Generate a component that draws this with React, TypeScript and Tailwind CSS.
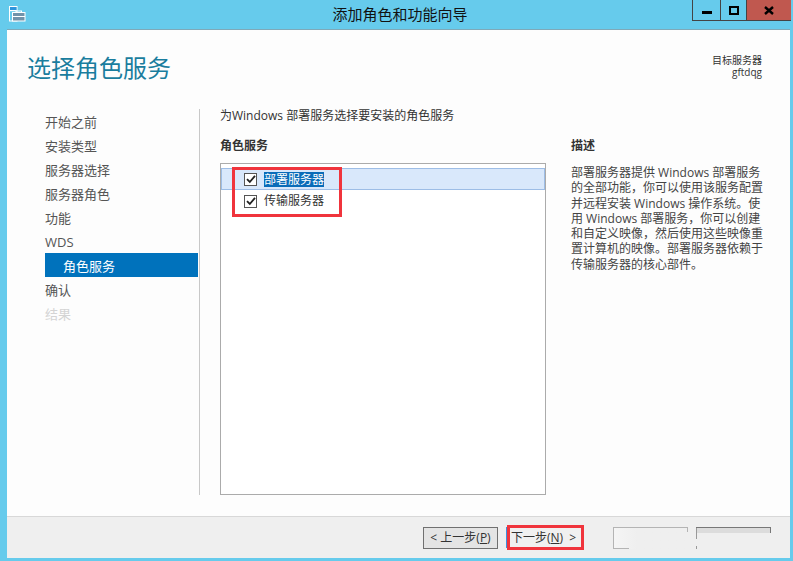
import React from 'react';

const font = { fontFamily: '"Open Sans", "Noto Sans CJK SC", sans-serif' };

const steps = ['开始之前', '安装类型', '服务器选择', '服务器角色', '功能', 'WDS'];

const descLines = [
  '部署服务器提供 Windows 部署服务',
  '的全部功能，你可以使用该服务配置',
  '并远程安装 Windows 操作系统。使',
  '用 Windows 部署服务，你可以创建',
  '和自定义映像，然后使用这些映像重',
  '置计算机的映像。部署服务器依赖于',
  '传输服务器的核心部件。',
];

const Check = () => (
  <span className="w-[13px] h-[13px] border border-[#555] bg-white flex items-center justify-center shrink-0">
    <svg width="10" height="10" viewBox="0 0 10 10" fill="none">
      <path d="M1 5.2 L3.8 8 L9 1.8" stroke="#222" strokeWidth="1.8" />
    </svg>
  </span>
);

const WindowButtons = () => (
  <div className="flex h-[21px] mr-[2px] border-b border-l border-[#444]">
    <div className="w-[28px] border-r border-[#444] flex items-center justify-center">
      <div className="w-[10px] h-[3px] bg-black mt-[5px]" />
    </div>
    <div className="w-[26px] border-r border-[#444] flex items-center justify-center">
      <div className="w-[10px] h-[9px] border-2 border-black" />
    </div>
    <div className="w-[44px] bg-[#c0584f] flex items-center justify-center">
      <svg width="10" height="9" viewBox="0 0 10 9">
        <path d="M1 1 L9 8 M9 1 L1 8" stroke="#000" strokeWidth="2.4" />
      </svg>
    </div>
  </div>
);

const AppIcon = () => (
  <svg width="17" height="16" viewBox="0 0 17 16" fill="none" className="ml-[9px] mt-[6px] shrink-0">
    <rect x="0.5" y="0.5" width="7.5" height="14.5" fill="#66cbec" stroke="#fff" />
    <rect x="1" y="1" width="6.5" height="3" fill="#2f95dc" />
    <rect x="1" y="4" width="6.5" height="1.2" fill="#fff" />
    <rect x="3.5" y="6.5" width="12.5" height="8.5" fill="#7193aa" stroke="#fff" />
    <rect x="7" y="5" width="5.5" height="1.5" stroke="#fff" />
    <rect x="4" y="10" width="12" height="1" fill="#fff" />
  </svg>
);

export default function App() {
  return (
    <div className="w-[793px] h-[561px] bg-[#66cbec] flex flex-col overflow-hidden text-[#444]" style={font}>
      <div className="h-[29px] flex justify-between shrink-0">
        <AppIcon />
        <div className="flex-1 text-center text-[15px] leading-[29px] text-[#111] pl-[82px]">添加角色和功能向导</div>
        <WindowButtons />
      </div>

      <div className="ml-[7px] mr-[3px] h-[529px] flex flex-col border-t border-[#7fa9b8] bg-[#fdfdfd]">
        <div className="h-[79px] flex justify-between shrink-0 pl-[20px] pr-[28px]">
          <h1 className="text-[24px] leading-[32px] mt-[22px] text-[#1a7d9e]">选择角色服务</h1>
          <div className="text-right text-[10px] leading-[12px] mt-[24px] text-[#333]">
            <div>目标服务器</div>
            <div>gftdqg</div>
          </div>
        </div>

        <div className="flex h-[386px] shrink-0">
          <nav className="w-[193px] border-r border-[#c8c8c8] pl-[38px] text-[13px] leading-[26px] text-[#555] shrink-0">
            {steps.map((s) => (
              <div key={s} className="h-[24px]">{s}</div>
            ))}
            <div className="h-[24px] mr-px bg-[#0072bc] text-white pl-[18px]">角色服务</div>
            <div className="h-[24px]">确认</div>
            <div className="h-[24px] text-[#d4d4d4]">结果</div>
          </nav>

          <div className="pl-[20px] flex flex-col flex-1">
            <p className="text-[12px] leading-[16px] text-[#333] -mt-[1px]">为Windows 部署服务选择要安装的角色服务</p>
            <div className="flex flex-1 mt-[14px]">
              <div className="w-[326px] flex flex-col shrink-0">
                <h2 className="text-[12px] leading-[16px] font-bold text-[#333]">角色服务</h2>
                <div className="relative mt-[9px] flex-1 bg-white border border-[#ababab] pt-[4px] text-[12px] text-[#333]">
                  <div className="h-[22px] flex items-center pl-[22px] gap-[7px] bg-[#d9e8fb] border border-[#9dbde6]">
                    <Check />
                    <span className="bg-[#0a6cb8] text-white leading-[15px]">部署服务器</span>
                  </div>
                  <div className="h-[22px] flex items-center pl-[23px] gap-[7px]">
                    <Check />
                    <span>传输服务器</span>
                  </div>
                  <div className="absolute left-[11px] top-[3px] w-[110px] h-[50px] border-[3px] border-[#f0343c]" />
                </div>
              </div>
              <div className="pl-[25px] flex-1">
                <h2 className="text-[12px] leading-[16px] font-bold text-[#333]">描述</h2>
                <div className="mt-[11px] text-[12px] leading-[15.3px] text-[#444] whitespace-nowrap">
                  {descLines.map((line) => (
                    <div key={line}>{line}</div>
                  ))}
                </div>
              </div>
            </div>
          </div>
        </div>

        <div className="mt-[21px] flex-1 bg-[#efefef] border-t border-[#d8d8d8] flex items-center pl-[416px] text-[12px] text-[#333]">
          <button className="w-[75px] h-[22px] border border-[#707070] bg-[#e4e4e4] whitespace-nowrap mt-[1px]">
            &lt; 上一步(<span className="underline">P</span>)
          </button>
          <div className="ml-[8px] w-px h-[21px] bg-[#3b8fe0]" />
          <button className="w-[77px] h-[25px] border-[3px] border-[#f0343c] bg-[#f0f0f0] whitespace-nowrap text-left pl-px">
            下一步(<span className="underline">N</span>)&nbsp;&nbsp;&gt;
          </button>
          <div className="relative ml-[29px] w-[75px] h-[22px] border-t border-l border-[#b4b4b4] bg-gradient-to-r from-[#f5f5f5] to-[#efefef] to-30% mt-[1px]">
            <div className="absolute left-0 bottom-0 w-[15px] h-px bg-[#b4b4b4]" />
            <div className="absolute right-0 top-0 w-px h-[4px] bg-[#b4b4b4]" />
          </div>
          <div className="relative ml-[8px] w-[75px] h-[22px] mt-[1px] border-t border-[#777]">
            <div className="h-[5px] bg-[#dcdcdc]" />
            <div className="absolute left-0 top-0 w-px h-[11px] bg-[#999]" />
            <div className="absolute right-0 top-0 w-px h-[5px] bg-[#777]" />
            <div className="absolute left-0 bottom-0 w-px h-[3px] bg-[#999]" />
          </div>
        </div>
      </div>
      <div className="h-[3px]" />
    </div>
  );
}
